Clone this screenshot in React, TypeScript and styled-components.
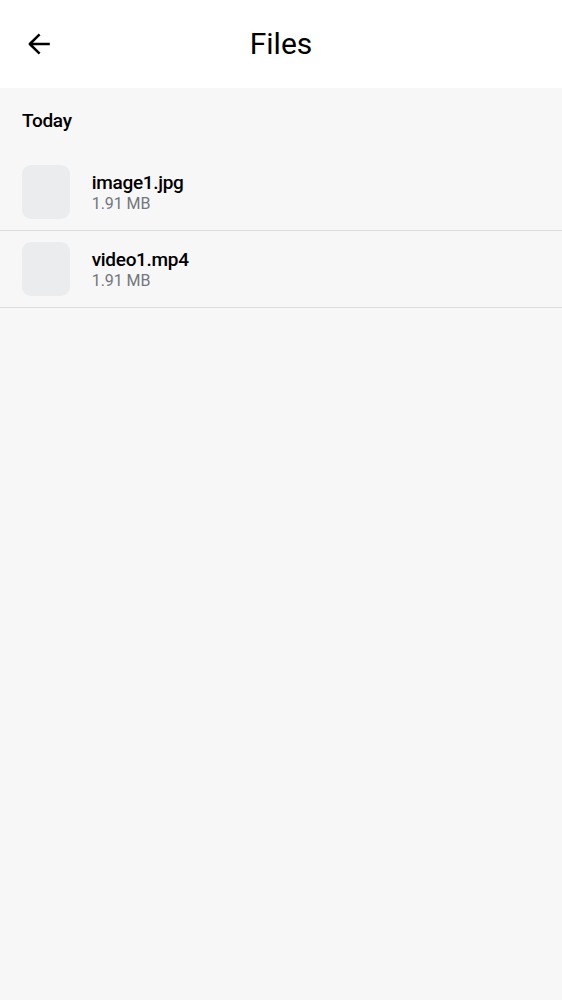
import React from "react";
import styled, { createGlobalStyle } from "styled-components";

const GlobalStyle = createGlobalStyle`
  * { box-sizing: border-box; }
  body { margin: 0; background: #f7f7f7; font-family: Roboto, sans-serif; color: #000; }
`;
const Screen = styled.div`
  min-height: 100vh;
  background: #f7f7f7;
`;
const Header = styled.header`
  display: grid;
  grid-template-columns: 78px 1fr 78px;
  align-items: center;
  height: 88px;
  background: #fff;
`;
const BackButton = styled.button`
  display: flex;
  justify-content: center;
  align-items: center;
  height: 88px;
  padding: 0;
  border: 0;
  background: none;
  color: #000;
`;
const Title = styled.h1`
  margin: 0;
  text-align: center;
  font-size: 30px;
  line-height: 36px;
  font-weight: 400;
`;
const SectionTitle = styled.h2`
  margin: 0;
  padding: 21px 22px;
  font-size: 19px;
  line-height: 24px;
  font-weight: 500;
  letter-spacing: -0.3px;
`;
const FileRow = styled.div`
  display: flex;
  align-items: center;
  gap: 21.7px;
  height: 77px;
  padding: 0 22px;
  border-bottom: 1px solid #dbdde1;
`;
const Thumb = styled.div`
  width: 48px;
  height: 54px;
  border-radius: 9px;
  background: #ebecee;
`;
const Info = styled.div`
  display: flex;
  flex-direction: column;
`;
const Name = styled.div`
  font-size: 19px;
  line-height: 22px;
  font-weight: 500;
  letter-spacing: -0.3px;
`;
const Size = styled.div`
  font-size: 16px;
  line-height: 19px;
  letter-spacing: -0.05px;
  color: #72767e;
`;

const files = [
  { name: "image1.jpg", size: "1.91 MB" },
  { name: "video1.mp4", size: "1.91 MB" },
];

export default function App() {
  return (
    <Screen>
      <GlobalStyle />
      <Header>
        <BackButton aria-label="Back">
          <svg
            width="24"
            height="24"
            viewBox="0 0 24 24"
            fill="none"
            stroke="currentColor"
            strokeWidth="2.5"
            strokeLinejoin="round"
          >
            <path d="M22.8 12H2.8M12.6 2.3 2.8 12l9.8 9.7" />
          </svg>
        </BackButton>
        <Title>Files</Title>
      </Header>
      <SectionTitle>Today</SectionTitle>
      {files.map((f) => (
        <FileRow key={f.name}>
          <Thumb />
          <Info>
            <Name>{f.name}</Name>
            <Size>{f.size}</Size>
          </Info>
        </FileRow>
      ))}
    </Screen>
  );
}
